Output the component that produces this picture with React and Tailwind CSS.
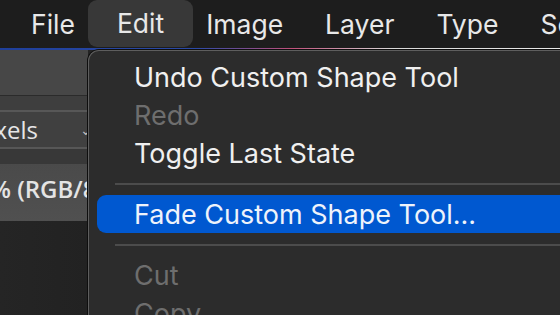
export default function App() {
  const font = { fontFamily: 'Inter, "Noto Sans", sans-serif' };
  return (
    <div className="w-[560px] h-[315px] overflow-hidden bg-[#252525] flex flex-col" style={font}>
      {/* menubar */}
      <div className="h-[48px] shrink-0 bg-[#1d1d1d] flex items-center pl-[31px] gap-[42px] text-[26.5px] text-[#e8e8e8] leading-none whitespace-nowrap">
        <span>File</span>
        <span className="h-[47px] self-start -mx-[29px] px-[29px] rounded-[9px] bg-[#383838] flex items-center">Edit</span>
        <span>Image</span>
        <span>Layer</span>
        <span>Type</span>
        <span>Select</span>
      </div>
      <div className="h-[2px] shrink-0 bg-[linear-gradient(90deg,#1f3f9a_0%,#2b4aa8_35%,#c0507a_52%,#d8d8d8_70%,#e8e8e8_100%)]" />
      <div className="flex-1 flex min-h-0">
        {/* left panel */}
        <div className="w-[88px] shrink-0 flex flex-col">
          <div className="h-[45px] bg-[#474747]" />
          <div className="h-[1px] bg-[#2b2b2b]" />
          <div className="h-[14px] bg-[#3e3e3e]" />
          <div className="h-[2px] bg-[#575757]" />
          <div className="h-[35px] bg-[#404040] flex items-center justify-end overflow-hidden text-[24px] text-[#e6e6e6]" style={{ fontFamily: '"Open Sans", sans-serif' }}>
            <span className="shrink-0">Pixels</span>
            <span className="shrink-0 ml-[42px] mr-[-4px] text-[14px] text-[#bdbdbd]">⌄</span>
          </div>
          <div className="h-[2px] bg-[#575757]" />
          <div className="h-[15px] bg-[#383838]" />
          <div className="h-[57px] pb-[8px] bg-[linear-gradient(180deg,#4a4a4a,#505050)] flex items-center overflow-hidden text-[24px] font-semibold text-[#e4e4e4]" style={{ fontFamily: '"Open Sans", sans-serif' }}>
            <span className="shrink-0 ml-[-51px]">100% (RGB/8)</span>
          </div>
          <div className="flex-1 bg-[linear-gradient(90deg,#252525,#222222)]" />
        </div>
        {/* dropdown */}
        <div className="flex-1 rounded-tl-[11px] border-l border-t border-[#5e5e5e] bg-[#2c2c2c] shadow-[0_0_0_1px_#0e0e0e] pt-[7px] pl-[8px] text-[27px] leading-none whitespace-nowrap">
          <div className="h-[38px] flex items-center pl-[37px] text-[#f0f0f0]">Undo Custom Shape Tool</div>
          <div className="h-[38px] flex items-center pl-[37px] text-[#6e6e6e]">Redo</div>
          <div className="h-[38px] flex items-center pl-[37px] text-[#f0f0f0]">Toggle Last State</div>
          <div className="h-[23px] flex items-center pl-[18px]"><div className="h-[2px] flex-1 bg-[#4c4c4c]" /></div>
          <div className="h-[38px] flex items-center pl-[37px] text-[#eef3fb] bg-[#0058d0] rounded-l-[9px]">Fade Custom Shape Tool...</div>
          <div className="h-[23px] flex items-center pl-[18px]"><div className="h-[2px] flex-1 bg-[#4c4c4c]" /></div>
          <div className="h-[38px] flex items-center pl-[37px] text-[#6e6e6e]">Cut</div>
          <div className="h-[38px] flex items-center pl-[37px] text-[#6e6e6e]">Copy</div>
        </div>
      </div>
    </div>
  );
}
